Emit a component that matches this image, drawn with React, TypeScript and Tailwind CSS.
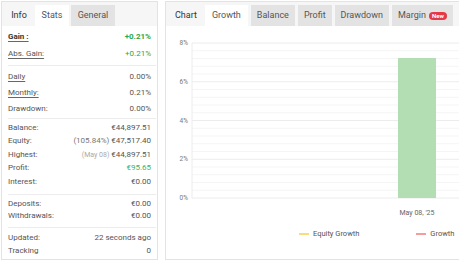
import type { ReactNode } from "react";

const FONT = { fontFamily: "Roboto, 'Liberation Sans', sans-serif" };

type Row = { label: ReactNode; value: ReactNode };

function Section({ rows, h, className }: { rows: Row[]; h: string; className: string }) {
  return (
    <div className={className}>
      {rows.map((r, i) => (
        <div key={i} className={`flex items-center justify-between ${h}`}>
          <span>{r.label}</span>
          <span>{r.value}</span>
        </div>
      ))}
    </div>
  );
}

function Sep() {
  return <div className="h-px bg-[#ececec] ml-[6px] mr-[1px]" />;
}

function StatsPanel() {
  const u = "underline decoration-[#666] underline-offset-[2px]";
  return (
    <div className="w-[157px] shrink-0 h-[259px] mt-[1px] ml-[1px] border border-[#e3e3e3] bg-white flex flex-col text-[8px] text-[#555]">
      <div className="h-[24px] bg-[#f6f6f6] flex items-end pl-[1px] text-[9px]">
        <div className="h-[21px] w-[32px] flex items-center justify-center text-[#333]">Info</div>
        <div className="h-[21px] w-[34px] flex items-center justify-center bg-white text-[#555]">Stats</div>
        <div className="h-[21px] w-[44px] ml-[2px] flex items-center justify-center bg-[#e3e3e3] text-[#555]">General</div>
      </div>
      <Section
        className="px-[6px] pt-[2px] pb-[3px]"
        h="h-[17px]"
        rows={[
          { label: <span className={`${u} font-bold text-[#333] decoration-[#333]`}>Gain :</span>, value: <span className="font-bold text-[#2aa84a]">+0.21%</span> },
          { label: <span className={u}>Abs. Gain:</span>, value: <span className="text-[#2aa84a]">+0.21%</span> },
        ]}
      />
      <Sep />
      <Section
        className="px-[6px] pt-[3px] pb-[1px]"
        h="h-[16px]"
        rows={[
          { label: <span className={u}>Daily</span>, value: "0.00%" },
          { label: <span className={u}>Monthly:</span>, value: "0.21%" },
          { label: "Drawdown:", value: "0.00%" },
        ]}
      />
      <Sep />
      <Section
        className="px-[6px] pt-[2px] pb-[5px]"
        h="h-[13.5px]"
        rows={[
          { label: "Balance:", value: "€44,897.51" },
          { label: "Equity:", value: <><span className="text-[#777]">(105.84%)</span> €47,517.40</> },
          { label: "Highest:", value: <><span className="text-[#aaa] text-[7px]">(May 08)</span> €44,897.51</> },
          { label: "Profit:", value: <span className="text-[#3cb55a]">€95.65</span> },
          { label: "Interest:", value: "€0.00" },
        ]}
      />
      <Sep />
      <Section
        className="px-[6px] pt-[3px] pb-[5px]"
        h="h-[12px]"
        rows={[
          { label: "Deposits:", value: "€0.00" },
          { label: "Withdrawals:", value: "€0.00" },
        ]}
      />
      <Sep />
      <Section
        className="px-[6px] pt-[4px]"
        h="h-[13px]"
        rows={[
          { label: "Updated:", value: "22 seconds ago" },
          { label: "Tracking", value: "0" },
        ]}
      />
    </div>
  );
}

const TABS = ["Balance", "Profit", "Drawdown"];

function GrowthChart() {
  const majors = [0, 1, 2, 3, 4];
  const labels = ["8%", "6%", "4%", "2%", "0%"];
  const top = 17;
  const step = 38.75;
  const lines: number[] = [];
  for (let i = 0; i <= 20; i++) lines.push(top + (step / 5) * i);
  return (
    <svg width="293" height="200" className="block">
      {lines.map((y, i) => (
        <line key={i} x1="26" x2="293" y1={y} y2={y} stroke={i % 5 === 0 ? "#ececec" : "#f5f5f5"} strokeWidth="1" />
      ))}
      <line x1="26" x2="26" y1={top} y2={top + step * 4} stroke="#ececec" />
      {majors.map((m) => (
        <text key={m} x="22" y={top + step * m + 2} textAnchor="end" fontSize="6.5" fill="#777" style={FONT}>
          {labels[m]}
        </text>
      ))}
      <rect x="232" y="32" width="38" height={top + step * 4 - 32} fill="#b3deb3" />
      <text x="251" y="189" textAnchor="middle" fontSize="7" fill="#666" style={FONT}>
        May 08, '25
      </text>
    </svg>
  );
}

function ChartPanel() {
  return (
    <div className="w-[300px] shrink-0 h-[259px] mt-[1px] ml-[7px] border border-[#e3e3e3] bg-white flex flex-col">
      <div className="h-[24px] bg-[#f6f6f6] flex items-end pl-[9px] text-[9px] text-[#555]">
        <div className="h-[21px] flex items-center text-[#333] mr-[8px]">Chart</div>
        <div className="h-[21px] px-[7px] flex items-center bg-white">Growth</div>
        {TABS.map((t) => (
          <div key={t} className="h-[21px] px-[6px] ml-[3px] flex items-center bg-[#e3e3e3]">{t}</div>
        ))}
        <div className="h-[21px] px-[6px] ml-[3px] flex items-center gap-[3px] bg-[#e3e3e3]">
          Margin
          <span className="bg-[#e53945] text-white text-[6px] font-bold rounded-full px-[3px] leading-[8px]">New</span>
        </div>
      </div>
      <GrowthChart />
      <div className="flex items-center h-[15px] text-[7.5px] text-[#555]">
        <div className="flex items-center ml-[133px]">
          <span className="block w-[10px] h-[2px] bg-[#fbdc7a] mr-[4px]" />
          Equity Growth
        </div>
        <div className="flex items-center ml-[57px]">
          <span className="block w-[10px] h-[2px] bg-[#f59d9d] mr-[4px]" />
          Growth
        </div>
      </div>
    </div>
  );
}

export default function App() {
  return (
    <div className="w-[459px] h-[262px] overflow-hidden bg-white flex items-start" style={FONT}>
      <StatsPanel />
      <ChartPanel />
    </div>
  );
}
